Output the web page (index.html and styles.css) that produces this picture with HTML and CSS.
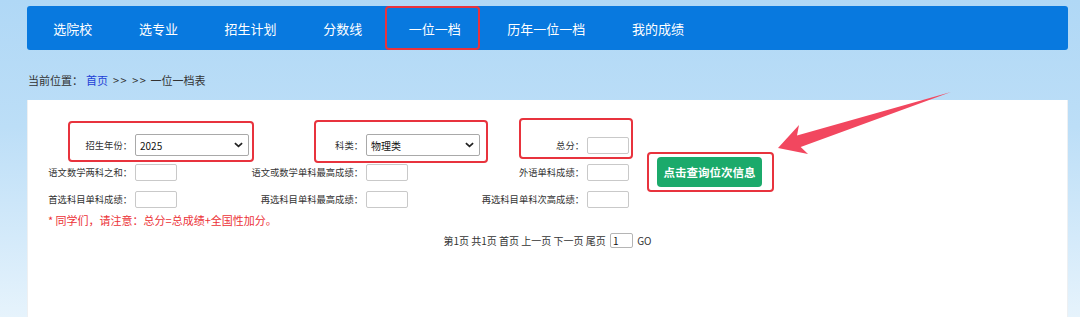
FILE: index.html
```html
<!DOCTYPE html>
<html lang="zh-CN">
<head>
<meta charset="utf-8">
<title>一位一档</title>
<link rel="stylesheet" href="styles.css">
</head>
<body>
<div class="page">
  <nav class="nav">
    <a class="nav-item">选院校</a>
    <a class="nav-item">选专业</a>
    <a class="nav-item">招生计划</a>
    <a class="nav-item">分数线</a>
    <a class="nav-item">一位一档</a>
    <a class="nav-item">历年一位一档</a>
    <a class="nav-item">我的成绩</a>
  </nav>
  <div class="crumb">当前位置：<a class="crumb-link">首页</a><span class="sep">&gt;&gt;</span><span class="sep">&gt;&gt;</span><span class="here">一位一档表</span></div>
  <section class="panel">
    <div class="form">
      <div class="lbl"><span>招生年份：</span></div>
      <div class="select sel-year"><span>2025</span><svg class="chev" viewBox="0 0 10 6" width="9" height="6"><path d="M1 1 L5 4.6 L9 1" fill="none" stroke="#222" stroke-width="1.9"/></svg></div>
      <div class="lbl"><span>科类：</span></div>
      <div class="select sel-type"><span>物理类</span><svg class="chev" viewBox="0 0 10 6" width="9" height="6"><path d="M1 1 L5 4.6 L9 1" fill="none" stroke="#222" stroke-width="1.9"/></svg></div>
      <div class="lbl"><span>总分：</span></div>
      <div class="field"><span class="box"></span></div>
      <div class="btn-cell"><button class="btn">点击查询位次信息</button></div>

      <div class="lbl"><span>语文数学两科之和：</span></div>
      <div class="field"><span class="box"></span></div>
      <div class="lbl"><span>语文或数学单科最高成绩：</span></div>
      <div class="field"><span class="box"></span></div>
      <div class="lbl"><span>外语单科成绩：</span></div>
      <div class="field"><span class="box"></span></div>

      <div class="lbl"><span>首选科目单科成绩：</span></div>
      <div class="field"><span class="box"></span></div>
      <div class="lbl"><span>再选科目单科最高成绩：</span></div>
      <div class="field"><span class="box"></span></div>
      <div class="lbl"><span>再选科目单科次高成绩：</span></div>
      <div class="field"><span class="box"></span></div>
    </div>
    <p class="note">* 同学们，请注意：总分=总成绩+全国性加分。</p>
    <div class="pager">第1页 共1页 首页 上一页 下一页 尾页 <span class="pg-input">1</span> GO</div>
  </section>
</div>
<svg class="annot" width="1080" height="317" viewBox="0 0 1080 317">
  <g fill="none" stroke="#e8333d" stroke-width="2">
    <rect x="386" y="7" width="93" height="42" rx="3"/>
    <rect x="69" y="122" width="184" height="39" rx="3"/>
    <rect x="315" y="121" width="172" height="41" rx="3"/>
    <rect x="520" y="119" width="112" height="39" rx="3"/>
    <rect x="648" y="153" width="125" height="38" rx="3"/>
  </g>
  <polygon fill="#f2475f" points="778,148 799,125 797,135.5 951,92 800.7,146.9 808,154"/>
</svg>
</body>
</html>
```

FILE: styles.css
```css
* { box-sizing: border-box; }

html, body {
  margin: 0;
  padding: 0;
}

body {
  width: 1080px;
  height: 317px;
  overflow: hidden;
  position: relative;
  font-family: "Noto Sans CJK SC", "Noto Sans", sans-serif;
  color: #333;
  background: linear-gradient(180deg, #b0d8f6 0%, #bcdef7 40%, #d4eafa 75%, #e6f3fc 100%);
}

.page {
  margin-left: 27px;
  width: 1041px;
  padding-top: 6px;
}

.nav {
  display: flex;
  align-items: stretch;
  height: 44px;
  padding-left: 3px;
  background: #0879df;
  border-radius: 3px;
}

.nav-item {
  display: flex;
  align-items: center;
  padding: 0 23.3px;
  color: #fff;
  font-size: 13px;
  line-height: 1;
  text-decoration: none;
  white-space: nowrap;
}

.crumb {
  margin: 20px 0 10px;
  padding-left: 1px;
  height: 20px;
  line-height: 20px;
  font-size: 11px;
  color: #333;
  white-space: nowrap;
}

.crumb-link {
  color: #1d3fd6;
  margin-left: 3px;
  text-decoration: none;
}

.sep {
  display: inline-block;
  margin-left: 5px;
  letter-spacing: 1.5px;
}

.sep + .sep { margin-left: 4px; }

.here {
  display: inline-block;
  margin-left: 3px;
}

.panel {
  background: #fff;
  border-left: 1px solid #eef0f2;
  border-right: 1px solid #eef0f2;
  height: 217px;
  padding-top: 34px;
}

.form {
  display: grid;
  grid-template-columns: 107px 114px 117px 118px 103px 70px auto;
  grid-template-rows: 22px 22px 22px;
  row-gap: 5px;
}

.lbl {
  display: flex;
  justify-content: flex-end;
  align-items: center;
  padding-right: 3px;
  font-size: 9.3px;
  color: #333;
  white-space: nowrap;
  min-width: 0;
}

.field {
  display: flex;
  align-items: center;
}

.box {
  display: block;
  width: 42px;
  height: 17px;
  border: 1px solid #c9c9c9;
  border-radius: 2px;
  background: #fff;
}

.select {
  display: flex;
  align-items: center;
  justify-content: space-between;
  height: 22px;
  padding: 0 5px 0 4px;
  border: 1px solid #a9a9a9;
  border-radius: 2px;
  font-size: 10px;
  color: #111;
  background: #fff;
}

.sel-year { width: 114px; }
.sel-type { width: 114px; }

.chev { display: block; }

.btn-cell {
  grid-column: 7;
  grid-row: 1 / 4;
  display: flex;
  align-items: center;
}

.btn {
  width: 105px;
  height: 30px;
  padding: 0;
  border: none;
  border-radius: 4px;
  background: #1baa6b;
  color: #fff;
  font-family: "Noto Sans CJK SC", sans-serif;
  font-size: 11.5px;
  font-weight: bold;
}

.note {
  margin: 2px 0 0;
  padding-left: 20px;
  line-height: 16px;
  font-size: 11px;
  color: #ec3237;
}

.pager {
  margin-top: 4px;
  display: flex;
  justify-content: center;
  align-items: center;
  height: 17px;
  font-size: 10px;
  color: #333;
  white-space: pre;
}

.pg-input {
  display: inline-block;
  width: 23px;
  height: 15px;
  margin: 0 2px;
  padding-left: 2px;
  border: 1px solid #b5b5b5;
  border-radius: 2px;
  line-height: 13px;
  color: #111;
}

.annot {
  position: absolute;
  left: 0;
  top: 0;
  pointer-events: none;
}
```
